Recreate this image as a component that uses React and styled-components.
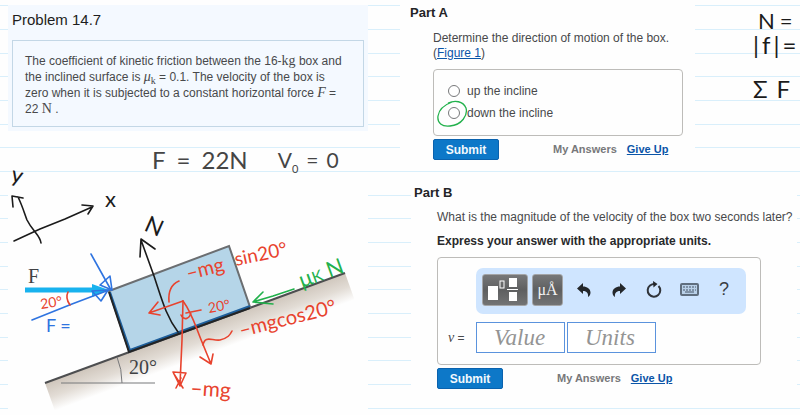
import React from "react";
import styled, { createGlobalStyle } from "styled-components";

const GlobalStyle = createGlobalStyle`
  *, *::before, *::after { box-sizing: border-box; }
  body {
    margin: 0;
    background: #ffffff;
    font-family: "Liberation Sans", Arial, sans-serif;
    font-size: 12px;
    line-height: 15px;
    color: #48494b;
  }
`;

const Page = styled.main`
  display: grid;
  grid-template-columns: 1fr 1fr;
  align-items: start;
  min-height: 100vh;
  overflow: hidden;
  background-color: #fefefe;
  background-image: linear-gradient(
    to bottom,
    #d9effb 0, #d9effb 1px, transparent 1px,
    transparent 24px, #d9effb 24px, #d9effb 25px, transparent 25px,
    transparent 48px, #d9effb 48px, #d9effb 49px, transparent 49px
  );
  background-size: 100% 71px;
  background-position: 0 5px;
`;

const Column = styled.div`
  display: flex;
  flex-direction: column;
  min-width: 0;
`;

const LeftColumn = styled(Column)`
  padding: 5px 32px 0 8px;
`;

const ProblemCard = styled.section`
  padding: 6px 4px 4px;
  background: #f4f9ff;
`;

const ProblemTitle = styled.h1`
  margin: 0 0 11px;
  font-size: 15px;
  line-height: 18px;
  font-weight: 400;
  color: #1d1e20;
`;

const Statement = styled.p`
  margin: 0;
  padding: 12px 18px 9px 12px;
  border: 1px solid #c3d7e6;
  font-size: 12px;
  line-height: 15px;
  min-height: 87px;
`;

const Mathematical = styled.span`
  font-family: "Liberation Serif", "Times New Roman", serif;
  font-size: 14px;
  line-height: 15px;
  font-style: ${(p) => (p.$italic ? "italic" : "normal")};
`;

const Subscript = styled.sub`
  font-family: "Liberation Serif", "Times New Roman", serif;
  font-size: 10px;
  line-height: 0;
`;

const HandNote = styled.p`
  display: flex;
  gap: ${(p) => p.$gap || 8}px;
  margin: 0;
  font-family: Lato, sans-serif;
  font-size: ${(p) => p.$size || 20}px;
  line-height: 24px;
  font-weight: 400;
  color: ${(p) => p.$color || "#1b1b1b"};
  white-space: nowrap;

  sub { font-size: 11px; line-height: 0; }
`;

const Givens = styled.div`
  display: flex;
  gap: 30px;
  padding: 17px 0 1px 144px;
`;

const Figure = styled.svg`
  display: block;
  width: 100%;
  height: auto;
  overflow: visible;
  background: #fefefe;
`;

const PartATop = styled.div`
  display: flex;
  justify-content: space-between;
`;

const Part = styled.section`
  flex: ${(p) => p.$basis || "none"};
  margin: ${(p) => p.$margin || 0};
  padding: ${(p) => p.$padding};
  background: #fefefe;
`;

const PartTitle = styled.h2`
  margin: 0 0 ${(p) => p.$after}px;
  font-size: 13px;
  line-height: 16px;
  font-weight: 700;
  color: #242527;
`;

const PartBody = styled.div`
  padding-left: 23px;
`;

const Question = styled.p`
  margin: 0 0 ${(p) => p.$after}px;
  font-size: 12px;
  line-height: 15px;
  font-weight: ${(p) => (p.$strong ? 700 : 400)};
  color: ${(p) => (p.$strong ? "#28292b" : "#48494b")};
`;

const TextLink = styled.a`
  color: #0b55a8;
  font-weight: ${(p) => (p.$strong ? 700 : 400)};
  text-decoration: underline;
`;

const ChoiceBox = styled.fieldset`
  min-width: 0;
  margin: 0 0 3px;
  padding: 10px 14px 11px;
  border: 1px solid #bdbcb9;
  border-radius: 4px;
`;

const Choice = styled.label`
  position: relative;
  display: flex;
  align-items: center;
  gap: 7px;
  height: 22px;
  font-size: 12px;
`;

const Radio = styled.input`
  appearance: none;
  width: 12px;
  height: 12px;
  margin: 0;
  border: 1px solid #77787a;
  border-radius: 50%;
  background: #ffffff;

  &:checked { background: radial-gradient(#333 3px, #fff 4px); }
`;

const GreenLoop = styled.svg`
  position: absolute;
  left: -12px;
  top: -2px;
  width: 33px;
  height: 28px;
  pointer-events: none;
`;

const Actions = styled.div`
  display: flex;
  align-items: center;
  font-size: 11px;
  font-weight: 700;
`;

const SubmitButton = styled.button`
  width: 66px;
  height: 21px;
  margin-right: 54px;
  padding: 0;
  border: 1px solid #0a62ae;
  border-radius: 2px;
  background: #0d78c8;
  color: #f2f8fd;
  font: 700 12px "Liberation Sans", Arial, sans-serif;
`;

const MyAnswers = styled.span`
  margin-right: 10px;
  color: #77787a;
`;

const MarginNotes = styled.aside`
  display: flex;
  flex-direction: column;
  width: 47px;
  padding-top: 9px;
`;

const NoteRow = styled(HandNote)`
  padding-left: ${(p) => p.$left || 0}px;
  margin-bottom: ${(p) => p.$after || 0}px;
`;

const AnswerBox = styled.div`
  display: flex;
  flex-direction: column;
  gap: 8px;
  margin: 0 36px 3px 0;
  padding: 10px 14px 11px 10px;
  border: 1px solid #bdbcb9;
  border-radius: 4px;
`;

const Toolbar = styled.div`
  display: flex;
  align-items: center;
  height: 46px;
  margin-left: 28px;
  padding: 0 6px;
  border-radius: 7px;
  background: #cfe5ff;
`;

const ToolKey = styled.button`
  display: grid;
  place-items: center;
  width: ${(p) => p.$width}px;
  height: 32px;
  margin: 0 4px 3px 0;
  padding: 0;
  border: 1px solid #a4a5a7;
  border-radius: 3px;
  background: linear-gradient(#777879, #5e5f60 50%, #727374);
  color: #f3f3f3;
  font: 16px "Liberation Serif", "Times New Roman", serif;
`;

const IconKeys = styled.div`
  display: flex;
  flex: 1;
  justify-content: space-between;
  max-width: 176px;
  padding-left: 1px;
  margin-bottom: 3px;
`;

const IconKey = styled.button`
  display: grid;
  place-items: center;
  width: 32px;
  height: 28px;
  padding: 0;
  border: 0;
  background: transparent;
  color: #3a3d42;
  font: 18px "Liberation Sans", Arial, sans-serif;
`;

const AnswerRow = styled.div`
  display: flex;
  align-items: center;
  gap: 2px;
`;

const VariableLabel = styled.label`
  width: 26px;
  font: 12px "Liberation Sans", Arial, sans-serif;
`;

const Variable = styled.i`
  font-family: "Liberation Serif", "Times New Roman", serif;
  font-size: 14px;
`;

const AnswerField = styled.input`
  width: 89px;
  height: 31px;
  padding: 0 0 0 17px;
  border: 1px solid #5b93dd;
  border-radius: 0;
  background: #ffffff;
  font: italic 23px "Liberation Serif", "Times New Roman", serif;

  &::placeholder { color: #949494; opacity: 1; }
`;

const Ink = styled.g`
  fill: none;
  stroke: ${(p) => p.$color};
  stroke-width: 1.6;
  stroke-linecap: round;
  stroke-linejoin: round;
`;

const InkText = styled.text`
  font-family: Lato, sans-serif;
  font-size: ${(p) => p.$size || 18}px;
  fill: ${(p) => p.$color};
`;

const PrintText = styled.text`
  font-family: "Liberation Serif", "Times New Roman", serif;
  font-size: 20px;
  fill: #404245;
`;

const BLACK = "#1b1b1b";
const RED = "#e8432e";
const BLUE = "#2f74e0";
const GREEN = "#22b14c";

function InclineFigure() {
  return (
    <Figure viewBox="8 173 360 240" role="img" aria-label="Box on a 20 degree incline with force annotations">
      <defs>
        <linearGradient id="ground" gradientUnits="userSpaceOnUse" x1="190" y1="330" x2="200" y2="357">
          <stop offset="0" stopColor="#cfc6bc" />
          <stop offset="0.5" stopColor="#e2dcd5" />
          <stop offset="1" stopColor="#fefefe" />
        </linearGradient>
      </defs>
      <polygon points="45,383 345,273 355,301 55,411" fill="url(#ground)" />
      <path d="M45 383 L345 273" stroke="#4d4e50" strokeWidth="2" />
      <polygon points="109,291 229,246 250,307 129,351" fill="#b5d5e8" stroke="#6b6e71" strokeWidth="2" />
      <path d="M110 292 L130 350 L250 306" fill="none" stroke="#1e5f9c" strokeWidth="2" />
      <path d="M109 292 L129 352 L250 308" fill="none" stroke="#222426" strokeWidth="2" />
      <path d="M61 383 H155 M117 357 Q122 369 122 383" fill="none" stroke="#77787a" strokeWidth="1" />
      <PrintText x="129" y="374">20°</PrintText>
      <PrintText x="28" y="283">F</PrintText>
      <path d="M25 290 H95" stroke="#18b2ee" strokeWidth="5" />
      <polygon points="92,284 109,290 92,297" fill="#18b2ee" />

      <Ink $color={BLACK}>
        <path d="M41 243 C40 235 33 232 27 220 C24 212 22 205 18 197 M13 207 L12 196 L23 198" />
        <path d="M14 241 L40 229 L65 219 L92 207 M82 205 L93 206 L88 214" />
        <path d="M178 332 C166 316 162 300 154 276 L141 240 M140 257 L141 239 L155 249" />
      </Ink>
      <InkText $color={BLACK} $size={22} transform="translate(10 181) rotate(14)">y</InkText>
      <InkText $color={BLACK} $size={22} x="105" y="207">x</InkText>
      <InkText $color={BLACK} $size={23} transform="translate(143 230) rotate(24)">N</InkText>

      <Ink $color={BLUE}>
        <path d="M32 320 L72 304 L109 290 M91 254 L101 272 L111 290" />
        <path d="M100 285 L110 276 L112 290 Z M92 291 L101 301 L108 290 Z" />
      </Ink>
      <InkText $color={BLUE} x="46" y="332">F =</InkText>

      <Ink $color={RED}>
        <path d="M68 292 Q65 298 70 305" />
        <path d="M183 301 L149 313 M158 302 L149 313 L160 315" />
        <path d="M169 302 C168 291 172 284 179 281" />
        <path d="M183 301 L182 340 L180 384 M173 372 L186 373 L180 386 Z M174 374 L183 388 M176 388 L181 378" />
        <path d="M183 301 C192 313 195 325 202 342 L211 364 M200 357 L211 364 L213 354" />
        <path d="M181 315 C184 321 190 319 191 312 M186 313 L201 310" />
        <path d="M203 345 C205 335 212 341 220 340 C228 338 230 335 232 331" />
      </Ink>
      <InkText $color={RED} $size={14} transform="translate(41 309) rotate(-8)">20°</InkText>
      <InkText $color={RED} $size={20} transform="translate(188 280) rotate(-14)">–mg</InkText>
      <InkText $color={RED} $size={19} transform="translate(236 266) rotate(-12)">sin20°</InkText>
      <InkText $color={RED} $size={14} transform="translate(209 313) rotate(-10)">20°</InkText>
      <InkText $color={RED} $size={20} transform="translate(241 337) rotate(-14)">–mgcos20°</InkText>
      <InkText $color={RED} $size={21} transform="translate(190 395) rotate(4)">–mg</InkText>

      <Ink $color={GREEN}>
        <path d="M294 289 L273 296 L253 302 M263 292 L253 302 L273 304" />
      </Ink>
      <InkText $color={GREEN} $size={22} transform="translate(302 288) rotate(-20)">
        μ<tspan fontSize="16">K</tspan> N
      </InkText>
    </Figure>
  );
}

function TemplateIcon() {
  return (
    <svg width="36" height="26" viewBox="0 0 36 26" fill="#ffffff" aria-hidden="true">
      <rect x="1" y="9" width="10" height="14" />
      <rect x="13" y="4" width="4" height="7" fill="none" stroke="#ffffff" />
      <rect x="22" y="1" width="8" height="9" />
      <rect x="20" y="12" width="11" height="1" />
      <rect x="22" y="15" width="8" height="9" />
    </svg>
  );
}

function UndoIcon({ mirrored }) {
  return (
    <svg width="14" height="14" viewBox="0 0 14 14" fill="#24272b" aria-hidden="true">
      <path
        transform={mirrored ? "translate(14 0) scale(-1 1)" : undefined}
        d="M0 5.5 L6 0 V3.5 C10 3.5 13.500 6 13.500 9.500 C13.500 11.500 12.500 13 11 14 C11.500 10.500 10 8 6 8 V11 Z"
      />
    </svg>
  );
}

function ResetIcon() {
  return (
    <svg width="18" height="18" viewBox="0 0 18 18" aria-hidden="true">
      <path d="M13.500 5 A6.300 6.300 0 1 1 5 4.500 C6 3.800 7.500 3 9 3" fill="none" stroke="#30343a" strokeWidth="2" />
      <path d="M8 0 L12.500 3 L8.500 6.500 Z" fill="#24272b" />
    </svg>
  );
}

function KeyboardIcon() {
  return (
    <svg width="19" height="13" viewBox="0 0 19 13" fill="none" aria-hidden="true">
      <rect x="1" y="1" width="17" height="11" rx="1" fill="#b9d0e8" stroke="#606e7e" strokeWidth="2" />
      <path d="M3 4 H16 M3 7 H16" stroke="#485668" strokeWidth="1" strokeDasharray="2 1" />
      <path d="M5 9 H14" stroke="#485668" strokeWidth="1" />
    </svg>
  );
}

function ActionRow() {
  return (
    <Actions>
      <SubmitButton type="button">Submit</SubmitButton>
      <MyAnswers>My Answers</MyAnswers>
      <TextLink $strong href="#give-up">Give Up</TextLink>
    </Actions>
  );
}

export default function App() {
  return (
    <>
      <GlobalStyle />
      <Page>
        <LeftColumn>
          <ProblemCard>
            <ProblemTitle>Problem 14.7</ProblemTitle>
            <Statement>
              The coefficient of kinetic friction between the 16-<Mathematical>kg</Mathematical> box and
              the inclined surface is <Mathematical $italic>μ</Mathematical>
              <Subscript>k</Subscript> = 0.1. The velocity of the box is zero when it is subjected to a
              constant horizontal force <Mathematical $italic>F</Mathematical> ={" "}
              22 <Mathematical>N</Mathematical> .
            </Statement>
          </ProblemCard>
          <Givens>
            <HandNote $color="#454545" $size={24} $gap={11}>
              <span>F</span><span>=</span><span>22N</span>
            </HandNote>
            <HandNote $color="#454545" $size={21}>
              <span>V<sub>0</sub></span><span>=</span><span>0</span>
            </HandNote>
          </Givens>
          <InclineFigure />
        </LeftColumn>

        <Column>
          <PartATop>
            <Part $padding="5px 12px 10px 10px" $basis="0 0 295px">
              <PartTitle $after={10}>Part A</PartTitle>
              <PartBody>
                <Question $after={8}>
                  Determine the direction of motion of the box.
                  <br />
                  (<TextLink href="#figure-1">Figure 1</TextLink>)
                </Question>
                <ChoiceBox aria-label="Direction of motion">
                  <Choice>
                    <Radio type="radio" name="direction" value="up" />
                    up the incline
                  </Choice>
                  <Choice>
                    <Radio type="radio" name="direction" value="down" />
                    down the incline
                    <GreenLoop viewBox="0 0 33 28" aria-hidden="true">
                      <path
                        d="M12 3 C19 0 27 1 30 8 C32 15 26 25 14 26 C6 27 1 23 2 16 C3 9 8 5 16 2"
                        fill="none" stroke={GREEN} strokeWidth="1.3"
                      />
                    </GreenLoop>
                  </Choice>
                </ChoiceBox>
                <ActionRow />
              </PartBody>
            </Part>
            <MarginNotes>
              <NoteRow $left={5} $gap={5} $size={22}><span>N</span><span>=</span></NoteRow>
              <NoteRow $size={24} $gap={3} $after={20}><span>|</span><span>f</span><span>|</span><span>=</span></NoteRow>
              <NoteRow $size={24} $gap={9}><span>Σ</span><span>F</span></NoteRow>
            </MarginNotes>
          </PartATop>

          <Part $padding="9px 0 16px 3px" $margin="6px 3px 0 11px">
            <PartTitle $after={9}>Part B</PartTitle>
            <PartBody>
              <Question $after={9}>What is the magnitude of the velocity of the box two seconds later?</Question>
              <Question $after={8} $strong>Express your answer with the appropriate units.</Question>
              <AnswerBox>
                <Toolbar role="toolbar" aria-label="Answer tools">
                  <ToolKey type="button" $width={46} aria-label="Templates"><TemplateIcon /></ToolKey>
                  <ToolKey type="button" $width={31} aria-label="Symbols">μÅ</ToolKey>
                  <IconKeys>
                    <IconKey type="button" aria-label="Undo"><UndoIcon /></IconKey>
                    <IconKey type="button" aria-label="Redo"><UndoIcon mirrored /></IconKey>
                    <IconKey type="button" aria-label="Reset"><ResetIcon /></IconKey>
                    <IconKey type="button" aria-label="Keyboard"><KeyboardIcon /></IconKey>
                    <IconKey type="button" aria-label="Help">?</IconKey>
                  </IconKeys>
                </Toolbar>
                <AnswerRow>
                  <VariableLabel htmlFor="value"><Variable>v</Variable> =</VariableLabel>
                  <AnswerField id="value" placeholder="Value" />
                  <AnswerField aria-label="Units" placeholder="Units" />
                </AnswerRow>
              </AnswerBox>
              <ActionRow />
            </PartBody>
          </Part>
        </Column>
      </Page>
    </>
  );
}
